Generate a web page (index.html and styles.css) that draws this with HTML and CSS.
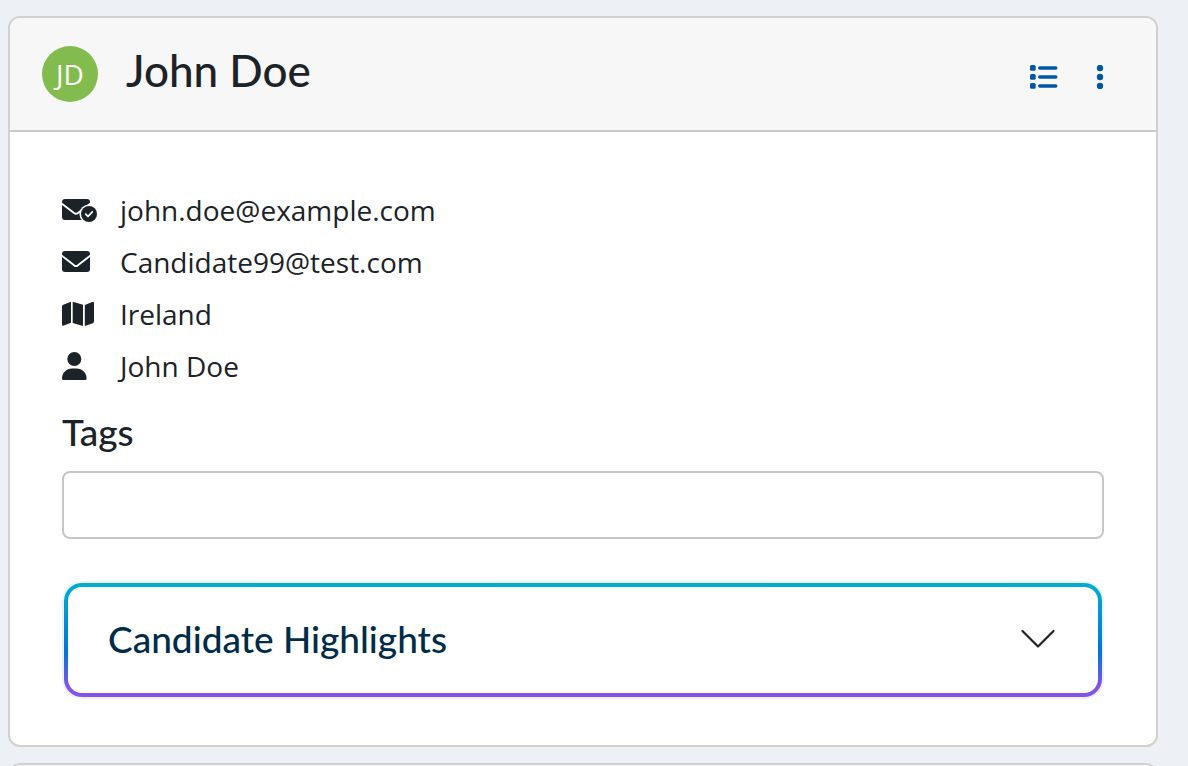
FILE: index.html
```html
<!DOCTYPE html>
<html lang="en">
<head>
<meta charset="utf-8">
<title>John Doe</title>
<link rel="stylesheet" href="styles.css">
</head>
<body>
<main class="page">
  <article class="card">
    <header class="card-header">
      <span class="avatar">JD</span>
      <h1 class="name">John Doe</h1>
      <div class="actions">
        <button class="icon-button" type="button" aria-label="List">
          <svg width="28" height="24" viewBox="0 0 28 24" fill="currentColor"><rect x="0" y="0" width="5.700" height="5.700" rx="1.500"/><rect x="0" y="9" width="5.700" height="5.700" rx="1.500"/><rect x="0" y="18" width="5.700" height="5.700" rx="1.500"/><rect x="8" y="1.200" width="19.500" height="3.600" rx="1.800"/><rect x="8" y="10.200" width="19.500" height="3.600" rx="1.800"/><rect x="8" y="19.200" width="19.500" height="3.600" rx="1.800"/></svg>
        </button>
        <button class="icon-button" type="button" aria-label="More">
          <svg width="8" height="24" viewBox="0 0 8 24" fill="currentColor"><circle cx="4" cy="3" r="3.2"/><circle cx="4" cy="12" r="3.2"/><circle cx="4" cy="21" r="3.2"/></svg>
        </button>
      </div>
    </header>
    <div class="card-body">
      <ul class="details">
        <li class="detail">
          <svg class="detail-icon" width="36" height="28" viewBox="0 0 36 28"><rect x="0" y="3" width="28" height="21" rx="3" fill="#1b2228"/><path d="M-.5 7.500 12.400 17.200Q14 18.300 15.600 17.200L28.500 7.500" fill="none" stroke="#fff" stroke-width="1.900"/><circle cx="27" cy="18" r="9.600" fill="#fff"/><circle cx="27" cy="18" r="8" fill="#1b2228"/><path d="m23.700 18.200 2.300 2.300 4.300-4.600" fill="none" stroke="#fff" stroke-width="1.700" stroke-linecap="round" stroke-linejoin="round"/></svg>
          <span>john.doe@example.com</span>
        </li>
        <li class="detail">
          <svg class="detail-icon" width="36" height="28" viewBox="0 0 36 28"><rect x="0" y="3" width="28" height="21" rx="3" fill="#1b2228"/><path d="M-.5 7.500 12.400 17.600Q14 18.700 15.600 17.600L28.500 7.500" fill="none" stroke="#fff" stroke-width="1.900"/></svg>
          <span>Candidate99@test.com</span>
        </li>
        <li class="detail">
          <svg class="detail-icon" width="36" height="28" viewBox="0 0 36 28" fill="#1b2228"><path d="M0 6.5Q0 5.2 1.2 4.7L9 1.8V22.8L1.8 25.6Q0 26.2 0 24.5ZM10.7 1.8 21 4.8V26L10.7 23ZM22.8 5 30.2 2Q32 1.4 32 3V21.5Q32 22.8 30.8 23.2L22.8 26Z"/></svg>
          <span>Ireland</span>
        </li>
        <li class="detail">
          <svg class="detail-icon" width="36" height="28" viewBox="0 0 36 28" fill="#1b2228"><circle cx="12.3" cy="7" r="7"/><path d="M10 16.4H14.6C20.2 16.4 24.6 20.8 24.6 26.4Q24.6 28 23 28H1.6Q0 28 0 26.4C0 20.8 4.4 16.4 10 16.4Z"/></svg>
          <span>John Doe</span>
        </li>
      </ul>
      <label class="tags-label" for="tags">Tags</label>
      <input class="tags-input" id="tags" type="text">
      <button class="highlights" type="button" aria-expanded="false">
        <span>Candidate Highlights</span>
        <svg width="34" height="20" viewBox="0 0 34 20" fill="none" stroke="#212529" stroke-width="2.2" stroke-linecap="round" stroke-linejoin="round"><path d="m1.5 2 15.5 15.5L32.5 2"/></svg>
      </button>
    </div>
  </article>
  <article class="card card-next"></article>
</main>
</body>
</html>
```
FILE: styles.css
```css
* {
  box-sizing: border-box;
}

body {
  margin: 0;
  background: #edf1f5;
  color: #1b2228;
  font-family: "Open Sans", "Noto Sans", sans-serif;
  font-size: 28px;
}

.page {
  display: flex;
  flex-direction: column;
  gap: 16px;
  height: 100vh;
  overflow: hidden;
  padding: 16px 30px 0 8px;
}

.card {
  flex: none;
  border: 2px solid #d0d0d0;
  border-radius: 12px;
  background: #fff;
  overflow: hidden;
}

.card-next {
  min-height: 112px;
  background: #f7f7f7;
}

.card-header {
  display: flex;
  align-items: center;
  gap: 28px;
  padding: 24px 52px 24px 32px;
  border-bottom: 2px solid #cacaca;
  background: #f7f7f7;
}

.avatar {
  display: grid;
  place-items: center;
  width: 56px;
  height: 56px;
  border-radius: 50%;
  background: #82bc4e;
  color: #fff;
  font-size: 28px;
  line-height: 56px;
}

.name {
  flex: 1;
  margin: 0;
  padding-bottom: 8px;
  font-family: Lato, sans-serif;
  font-size: 44px;
  font-weight: 500;
  line-height: 56px;
}

.actions {
  display: flex;
  gap: 38px;
  padding-top: 6px;
}

.icon-button {
  display: grid;
  padding: 0;
  border: 0;
  background: none;
  color: #0058a5;
}

.card-body {
  display: flex;
  flex-direction: column;
  padding: 52px 52px 48px;
}

.details {
  margin: 0;
  padding: 0;
  list-style: none;
}

.detail {
  display: flex;
  align-items: center;
  gap: 22px;
  line-height: 52px;
}

.detail-icon {
  flex: none;
}

.tags-label {
  margin: 16px 0 15px;
  font-family: Lato, sans-serif;
  font-size: 37px;
  font-weight: 500;
  line-height: 48px;
}

.tags-input {
  width: 100%;
  height: 68px;
  border: 2px solid #c6c6c6;
  border-radius: 8px;
  background: #fff;
  padding: 0 16px;
  font: inherit;
}

.highlights {
  display: flex;
  align-items: center;
  justify-content: space-between;
  margin: 44px 2px 0;
  padding: 28px 43px 30px 40px;
  border: 4px solid transparent;
  border-radius: 18px;
  background:
    linear-gradient(#fff, #fff) padding-box,
    linear-gradient(#00afd0, #0075db 60%, #8453eb 92%) border-box;
  box-shadow: 0 0 0 2px #edf2f6;
  color: #002b49;
  font-family: Lato, sans-serif;
  font-size: 37px;
  font-weight: 500;
  line-height: 48px;
  text-align: left;
}
```
